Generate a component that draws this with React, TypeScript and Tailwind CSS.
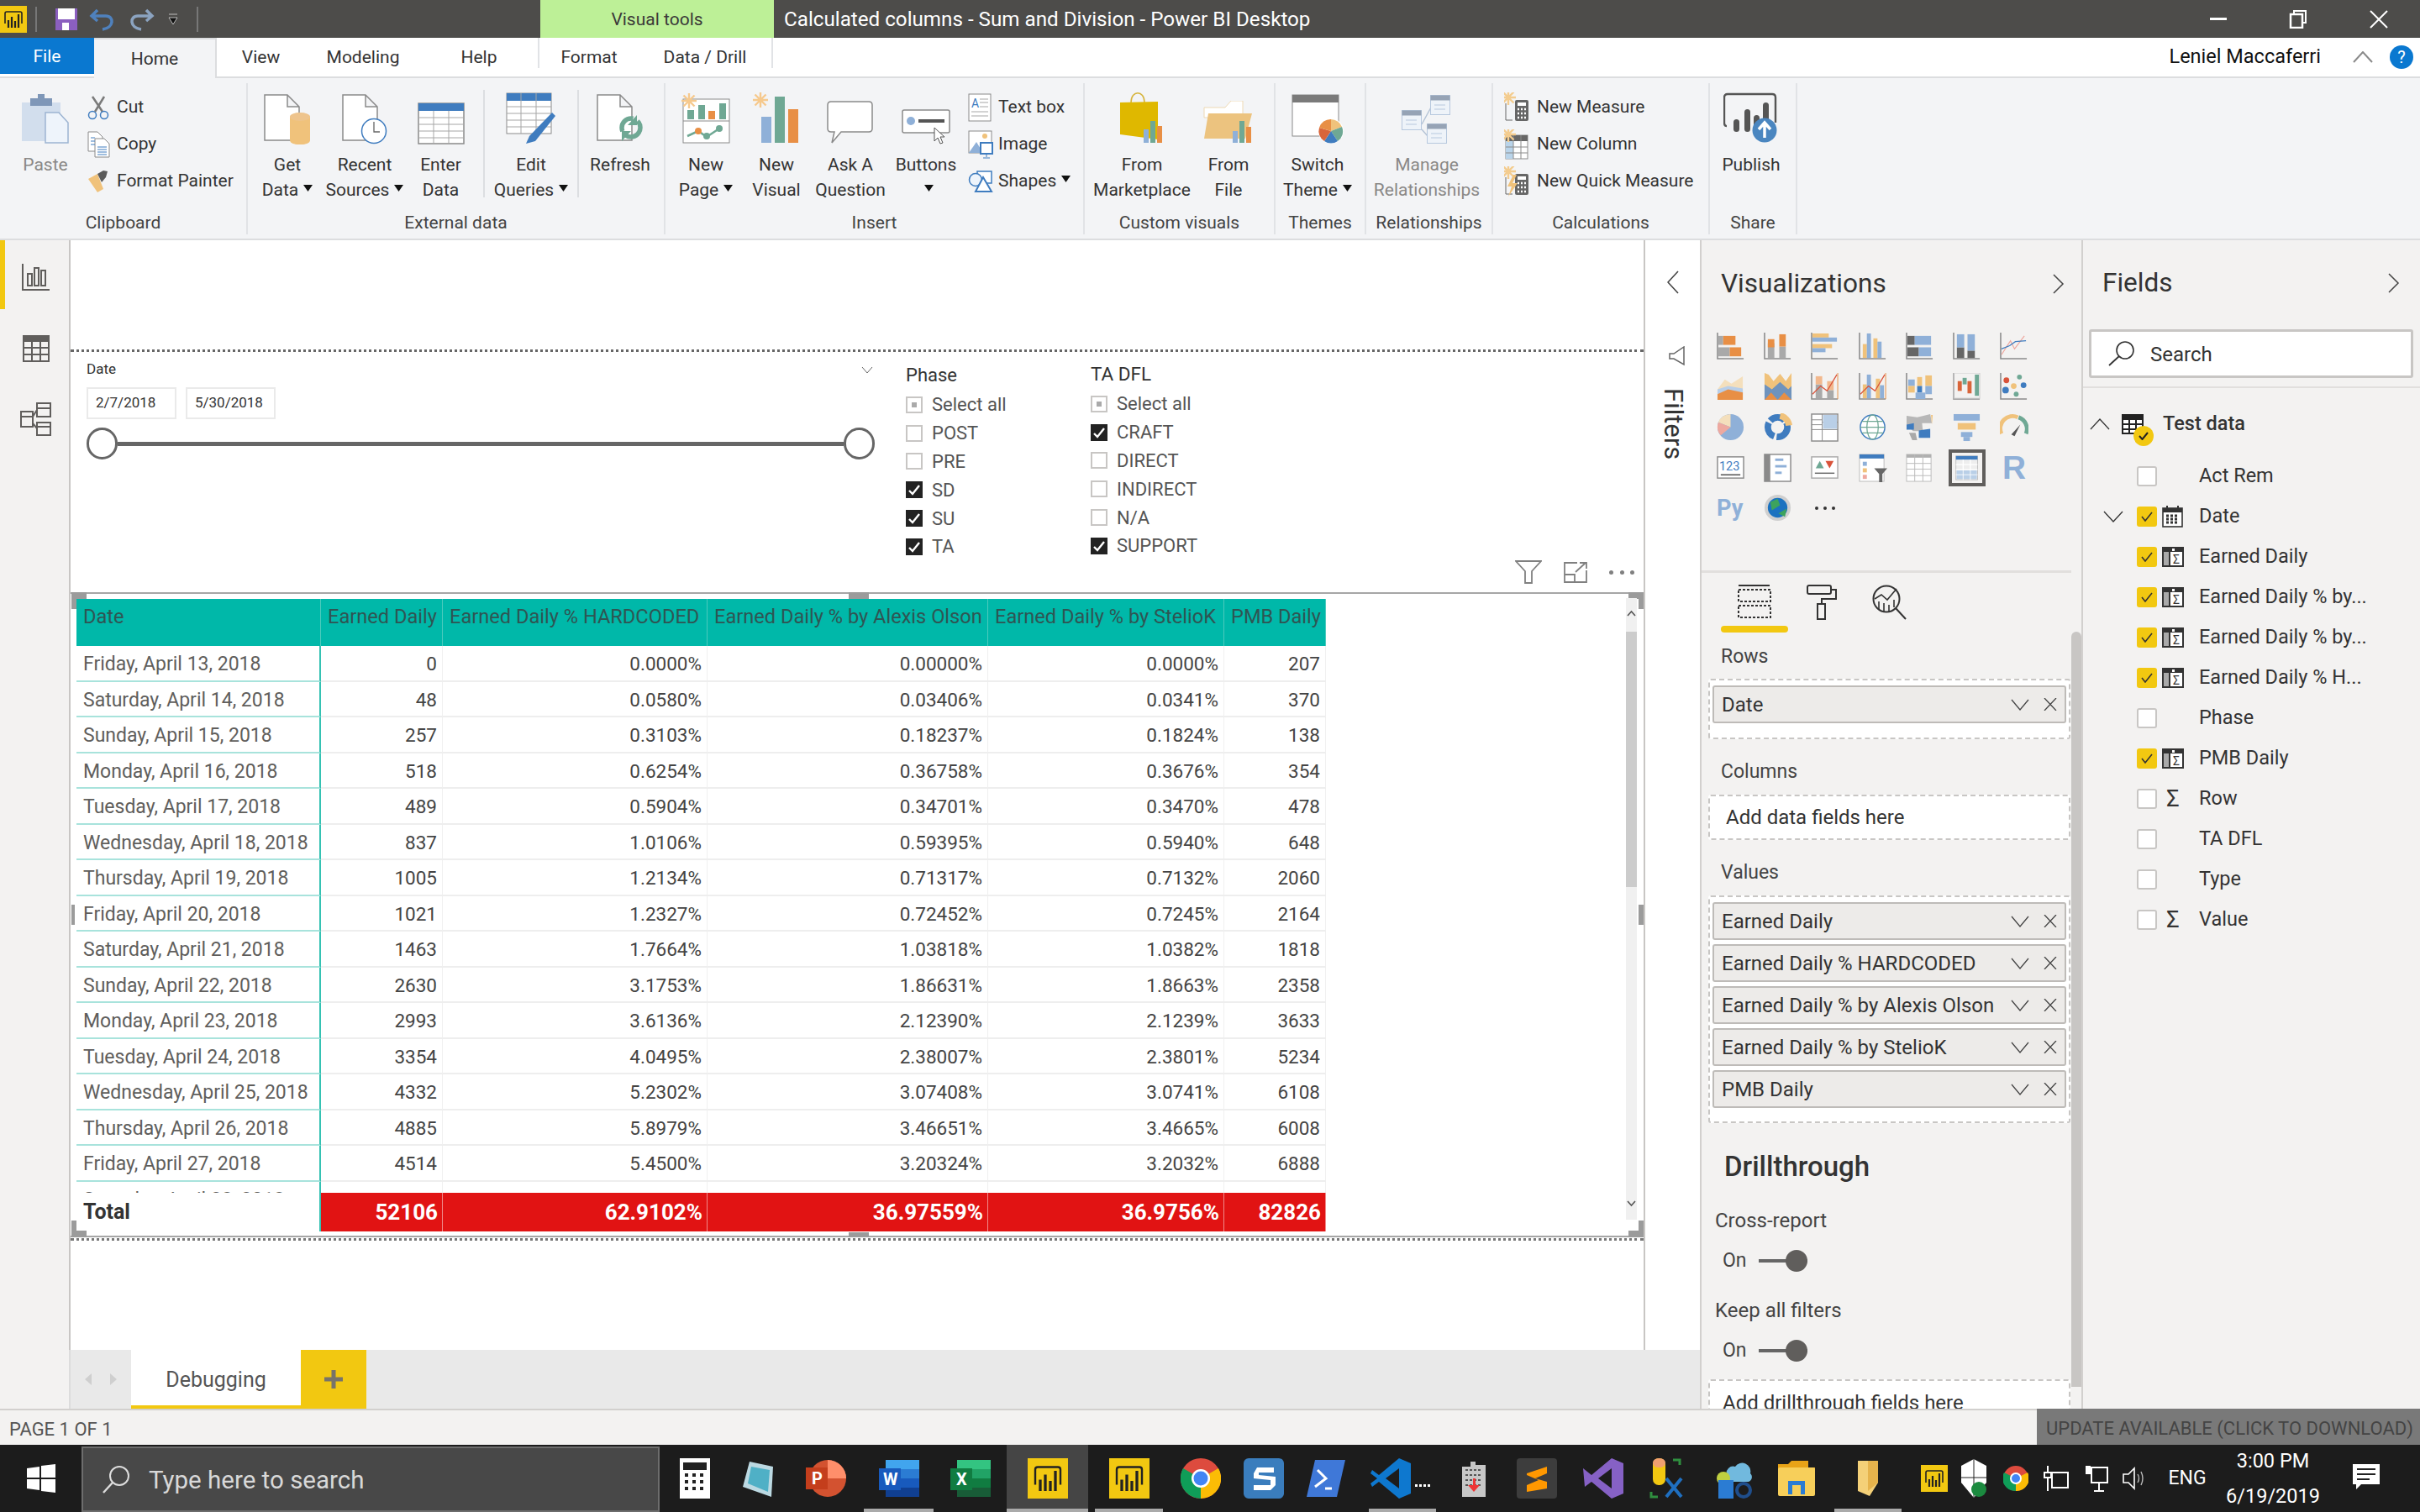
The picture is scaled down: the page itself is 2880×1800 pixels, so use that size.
import type { ReactNode } from 'react';

const GRAY = '#8a8a8a';
const BLUE = '#3f7cbf';
const LBLUE = '#8fb0d8';
const GREEN = '#6fa894';
const ORANGE = '#e88f45';
const TAN = '#f0c27b';
const YELLOW = '#f2c811';

function Star({ x, y, c = '#f6c98d' }: { x: number; y: number; c?: string }) {
  return (
    <g stroke={c} strokeWidth="2.4" transform={`translate(${x} ${y})`}>
      <path d="M0-9V9M-9 0H9M-6.5-6.5L6.5 6.5M-6.5 6.5L6.5-6.5" />
    </g>
  );
}

function PageShape({ w = 42, h = 55 }: { w?: number; h?: number }) {
  return <path d={`M1 1H${w - 14}L${w} ${15}V${h}H1Z M${w - 14} 1V15H${w}`} fill="#fff" stroke={GRAY} strokeWidth="1.5" />;
}

const Dropdown = () => (
  <svg width="11" height="8" viewBox="0 0 11 8" className="inline-block ml-[6px] mb-[6px]">
    <path d="M0 0H11L5.5 8Z" fill="#111" />
  </svg>
);

function Paste() {
  return (
    <svg width="58" height="62" viewBox="0 0 58 62">
      <rect x="1" y="12" width="46" height="46" fill="#d2deed" />
      <path d="M11 12V7H20V2H28V7H37V16H11Z" fill="#7f97b8" />
      <path d="M29 24H45L56 36V60H29Z" fill="#eef4fb" stroke="#9db4d2" strokeWidth="1.5" />
    </svg>
  );
}
function Cut() {
  return (
    <svg width="27" height="30" viewBox="0 0 27 30">
      <path d="M6 2L18 20M20 2L9 20" stroke="#7a7a7a" strokeWidth="2.5" fill="none" />
      <circle cx="6" cy="24" r="4.5" stroke={BLUE} strokeWidth="1.5" fill="none" />
      <circle cx="20" cy="24" r="4.5" stroke={BLUE} strokeWidth="1.5" fill="none" />
    </svg>
  );
}
function Copy() {
  return (
    <svg width="27" height="32" viewBox="0 0 27 32">
      <path d="M1 1H12L18 7V24H1Z" fill="#fff" stroke={GRAY} />
      <path d="M9 9H20L26 15V31H9Z" fill="#fff" stroke={GRAY} />
      <path d="M4 8H9M4 12H9M4 16H9M12 19H23M12 22H23M12 25H23M12 28H23" stroke={BLUE} />
    </svg>
  );
}
function Brush() {
  return (
    <svg width="27" height="26" viewBox="0 0 27 26">
      <path d="M1 10L12 4L19 22L12 26Z" fill={TAN} />
      <path d="M12 4L19 0L24 1L22 8L17 14Z" fill="#5b5b5b" />
    </svg>
  );
}
function GetData() {
  return (
    <svg width="56" height="60" viewBox="0 0 56 60">
      <PageShape />
      <path d="M31 28C31 21 55 21 55 28V55C55 62 31 62 31 55Z" fill={TAN} />
      <ellipse cx="43" cy="27" rx="12" ry="5" fill="#eec48d" />
    </svg>
  );
}
function Recent() {
  return (
    <svg width="54" height="60" viewBox="0 0 54 60">
      <PageShape />
      <circle cx="38" cy="44" r="14.5" fill="#fff" stroke={BLUE} strokeWidth="1.5" />
      <path d="M38 33V45H45" fill="none" stroke="#666" strokeWidth="1.3" />
    </svg>
  );
}
function EnterData() {
  return (
    <svg width="56" height="50" viewBox="0 0 56 50">
      <rect x="1" y="1" width="54" height="48" fill="#fff" stroke={GRAY} strokeWidth="1.5" />
      <rect x="1" y="1" width="54" height="9" fill={BLUE} />
      <path d="M1 18H55M1 26H55M1 34H55M1 42H55M19 10V49M37 10V49" stroke="#a6a6a6" />
    </svg>
  );
}
function EditQueries() {
  return (
    <svg width="60" height="62" viewBox="0 0 60 62">
      <rect x="1" y="1" width="53" height="48" fill="#fff" stroke={GRAY} />
      <rect x="1" y="1" width="53" height="9" fill={BLUE} />
      <path d="M1 17H54M1 25H54M1 33H54M1 41H54M18 1V49M36 1V49" stroke="#a6a6a6" />
      <path d="M55 24L59 28L35 58L24 61L28 52Z" fill={BLUE} />
    </svg>
  );
}
function Refresh() {
  return (
    <svg width="56" height="60" viewBox="0 0 56 60">
      <PageShape />
      <circle cx="41" cy="40" r="11" fill="none" stroke={GREEN} strokeWidth="5.5" strokeDasharray="24 6" />
      <path d="M48 25V37H37Z" fill={GREEN} />
      <path d="M30 56V44H41Z" fill={GREEN} />
    </svg>
  );
}
function NewPage() {
  return (
    <svg width="58" height="62" viewBox="0 0 58 62">
      <rect x="2" y="8" width="55" height="52" fill="#fff" stroke={GRAY} />
      <path d="M2 34H57" stroke={GRAY} />
      <rect x="7" y="21" width="8" height="11" fill={GREEN} />
      <rect x="20" y="15" width="8" height="17" fill={GREEN} />
      <rect x="32" y="22" width="8" height="10" fill={ORANGE} />
      <rect x="45" y="13" width="8" height="19" fill={GREEN} />
      <path d="M7 52L20 46L30 53L45 43" stroke={GREEN} strokeWidth="2.5" fill="none" />
      <circle cx="20" cy="46" r="4" fill={ORANGE} />
      <circle cx="30" cy="52" r="4" fill={GREEN} />
      <circle cx="45" cy="43" r="4" fill={GREEN} />
      <Star x={9} y={10} />
    </svg>
  );
}
function NewVisual() {
  return (
    <svg width="56" height="62" viewBox="0 0 56 62">
      <Star x={9} y={9} />
      <rect x="10" y="29" width="12" height="31" fill={LBLUE} />
      <rect x="26" y="5" width="12" height="55" fill={GREEN} />
      <rect x="42" y="20" width="12" height="40" fill={ORANGE} />
    </svg>
  );
}
function Ask() {
  return (
    <svg width="56" height="52" viewBox="0 0 56 52">
      <path d="M5 1H50Q54 1 54 5V33Q54 37 50 37H17L6 50L9 37H5Q1 37 1 33V5Q1 1 5 1Z" fill="#fff" stroke="#8a8a8a" strokeWidth="1.5" />
    </svg>
  );
}
function Buttons() {
  return (
    <svg width="58" height="42" viewBox="0 0 58 42">
      <rect x="1" y="1" width="56" height="27" rx="2" fill="#fff" stroke={GRAY} strokeWidth="1.5" />
      <circle cx="11" cy="14" r="5" fill={LBLUE} />
      <rect x="20" y="12" width="31" height="4" fill="#555" />
      <path d="M39 22V38L43 34L46 41L49 40L46 33H51Z" fill="#fff" stroke="#555" />
    </svg>
  );
}
function TextBoxI() {
  return (
    <svg width="28" height="34" viewBox="0 0 28 34">
      <rect x="1" y="1" width="26" height="32" fill="#fff" stroke={GRAY} />
      <text x="4" y="17" fontSize="14" fill={BLUE} fontFamily="Roboto">A</text>
      <path d="M14 7H24M14 11H24M14 16H24M4 22H24M4 27H24" stroke="#a6a6a6" />
    </svg>
  );
}
function ImageI() {
  return (
    <svg width="30" height="34" viewBox="0 0 30 34">
      <rect x="1" y="1" width="27" height="26" fill="#fff" stroke={GRAY} />
      <circle cx="20" cy="7" r="3" fill={TAN} />
      <path d="M1 27L10 14L18 27Z" fill={LBLUE} />
      <rect x="15" y="15" width="14" height="13" fill="#fff" stroke={BLUE} strokeWidth="2" />
      <path d="M22 28V32M18 33H26" stroke={BLUE} />
    </svg>
  );
}
function ShapesI() {
  return (
    <svg width="30" height="26" viewBox="0 0 30 26">
      <rect x="11" y="1" width="17" height="14" fill="#fff" stroke={BLUE} strokeWidth="1.5" />
      <circle cx="9" cy="11" r="7.5" fill="#eef4fb" stroke={BLUE} strokeWidth="1.5" />
      <path d="M18 8L28 25H9Z" fill="#fff" stroke={BLUE} strokeWidth="2" />
    </svg>
  );
}
function Market() {
  return (
    <svg width="54" height="62" viewBox="0 0 54 62">
      <path d="M14 12C14-3 30-3 30 12" fill="none" stroke="#d6b43c" strokeWidth="1.5" />
      <path d="M1 12L46 11V56L1 50Z" fill="#dfb800" transform="translate(0 0)" />
      <rect x="29" y="44" width="6" height="16" fill={LBLUE} />
      <rect x="37" y="34" width="6" height="26" fill={GREEN} />
      <rect x="45" y="40" width="6" height="20" fill={ORANGE} />
    </svg>
  );
}
function FromFile() {
  return (
    <svg width="60" height="52" viewBox="0 0 60 52">
      <path d="M1 8H26L33 0H47V20H1Z" fill="#fff" stroke="#eed9b4" />
      <path d="M6 15H58L50 45H1Z" fill="#ecc37f" />
      <rect x="35" y="36" width="6" height="14" fill={LBLUE} />
      <rect x="43" y="24" width="6" height="26" fill={GREEN} />
      <rect x="51" y="31" width="6" height="19" fill={ORANGE} />
    </svg>
  );
}
function Theme() {
  return (
    <svg width="62" height="60" viewBox="0 0 62 60">
      <rect x="1" y="1" width="55" height="49" fill="#fff" stroke={GRAY} />
      <rect x="1" y="1" width="55" height="9" fill="#7a7a7a" />
      <circle cx="47" cy="44" r="15" fill="#fff" />
      <path d="M47 44V30A14 14 0 0 1 60 39Z" fill={TAN} />
      <path d="M47 44L60 39A14 14 0 0 1 55 56Z" fill={GREEN} />
      <path d="M47 44L55 56A14 14 0 0 1 39 56Z" fill={BLUE} />
      <path d="M47 44L39 56A14 14 0 0 1 33 40Z" fill="#d9653a" />
      <path d="M47 44L33 40A14 14 0 0 1 47 30Z" fill={ORANGE} />
    </svg>
  );
}
function Rel() {
  return (
    <svg width="60" height="60" viewBox="0 0 60 60">
      <path d="M24 36L36 14M24 42L31 50" stroke="#b6c4d6" strokeWidth="1.5" />
      {[[34, 1], [0, 19], [30, 35]].map(([x, y]) => (
        <g key={x + '-' + y} transform={`translate(${x} ${y})`}>
          <rect x="0.5" y="0.5" width="23" height="23" fill="#eef3f9" stroke="#b7c8de" />
          <rect x="0.5" y="0.5" width="23" height="6" fill="#96a3b5" />
          <path d="M5 12H18M5 17H18" stroke="#b7c8de" />
        </g>
      ))}
    </svg>
  );
}
function MeasureI({ bolt }: { bolt?: boolean }) {
  return (
    <svg width="32" height="36" viewBox="0 0 32 36">
      <Star x={5} y={6} c="#f3cc8f" />
      <path d="M2 13V33H10" fill="none" stroke="#666" />
      <rect x="13" y="9" width="16" height="25" rx="2" fill="#666" />
      <rect x="16" y="12" width="10" height="4" fill="#fff" />
      <path d="M16 20H26M16 25H26M16 30H26" stroke="#fff" strokeWidth="2.5" strokeDasharray="2 2" />
      {bolt && <path d="M11 10L4 24H9L5 36L16 20H10L15 10Z" fill={TAN} />}
    </svg>
  );
}
function ColumnI() {
  return (
    <svg width="30" height="36" viewBox="0 0 30 36">
      <rect x="2" y="7" width="26" height="28" fill="#fff" stroke="#8a8a8a" />
      <rect x="2" y="7" width="26" height="7" fill="#666" />
      <rect x="2" y="14" width="9" height="21" fill="#b9d4ea" />
      <path d="M2 21H28M2 28H28M11 7V35M20 7V35" stroke="#8a8a8a" />
      <Star x={5} y={6} c="#f3cc8f" />
    </svg>
  );
}
function Publish() {
  return (
    <svg width="66" height="62" viewBox="0 0 66 62">
      <path d="M4 40Q1 40 1 36V6Q1 2 5 2H58Q62 2 62 6V36" fill="none" stroke="#555" strokeWidth="2.4" />
      <rect x="12" y="32" width="7" height="15" rx="3.5" fill="#555" />
      <rect x="25" y="20" width="7" height="27" rx="3.5" fill="#555" />
      <rect x="36" y="27" width="7" height="20" rx="3.5" fill="#555" />
      <rect x="47" y="12" width="7" height="28" rx="3.5" fill="#555" />
      <circle cx="49" cy="45" r="14.5" fill="#4a86c0" />
      <path d="M49 54V38M42 44L49 36L56 44" stroke="#fff" strokeWidth="3.5" fill="none" />
    </svg>
  );
}
const PbiMark = ({ size = 32 }: { size?: number }) => (
  <svg width={size} height={size} viewBox="0 0 32 32">
    <rect width="32" height="32" fill={YELLOW} />
    <path d="M6 21V9Q6 7 8 7H24Q26 7 26 9V21" fill="none" stroke="#222" strokeWidth="1.6" />
    <path d="M10 17V26M14 13V26M18 18V26M22 10V26" stroke="#222" strokeWidth="2.2" />
  </svg>
);

function LargeBtn({ w, icon, l1, l2, caret, dim, lone }: { w: string; icon: ReactNode; l1: string; l2?: string; caret?: boolean; dim?: boolean; lone?: boolean }) {
  return (
    <div className={`${w} flex flex-col items-center ${dim ? 'text-[#8a8886]' : 'text-[#333]'}`}>
      <div className="h-[82px] flex items-end justify-center pb-[9px]">{icon}</div>
      <div className="leading-[30px] whitespace-nowrap">{l1}</div>
      <div className="leading-[30px] h-[30px] whitespace-nowrap">
        {l2}
        {caret && !lone && <Dropdown />}
        {lone && <Dropdown />}
      </div>
    </div>
  );
}

function SmallBtn({ icon, label, box, caret }: { icon: ReactNode; label: string; box: string; caret?: boolean }) {
  return (
    <div className="h-[44px] flex items-center text-[#333] whitespace-nowrap">
      <div className={`${box} flex items-center`}>{icon}</div>
      {label}
      {caret && <Dropdown />}
    </div>
  );
}

function Group({ w, label, children }: { w: string; label: string; children: ReactNode }) {
  return (
    <div className={`${w} h-[180px] border-r-2 border-[#e1e3e6] flex flex-col shrink-0`}>
      <div className="h-[151px] flex">{children}</div>
      <div className="h-[29px] leading-[31px] text-center text-[#444] text-[21px] whitespace-nowrap">{label}</div>
    </div>
  );
}

function Ribbon() {
  return (
    <div className="h-[193px] bg-[#f3f4f6] border-b-2 border-[#dcdddf] flex pt-[6px] text-[21px]">
      <Group w="w-[295px]" label="Clipboard">
        <div className="w-[104px] pl-[4px]"><LargeBtn w="w-[100px]" icon={<Paste />} l1="Paste" dim /></div>
        <div className="pt-[7px]">
          <SmallBtn box="w-[35px]" icon={<Cut />} label="Cut" />
          <SmallBtn box="w-[35px]" icon={<Copy />} label="Copy" />
          <SmallBtn box="w-[35px]" icon={<Brush />} label="Format Painter" />
        </div>
      </Group>
      <Group w="w-[497px]" label="External data">
        <LargeBtn w="w-[94px]" icon={<GetData />} l1="Get" l2="Data" caret />
        <LargeBtn w="w-[90px]" icon={<Recent />} l1="Recent" l2="Sources" caret />
        <LargeBtn w="w-[91px]" icon={<EnterData />} l1="Enter" l2="Data" />
        <div className="w-[2px] h-[128px] mt-[8px] ml-[5px] bg-[#dcdee1]" />
        <LargeBtn w="w-[110px]" icon={<EditQueries />} l1="Edit" l2="Queries" caret />
        <div className="w-[2px] h-[128px] mt-[8px] bg-[#dcdee1]" />
        <LargeBtn w="w-[98px]" icon={<Refresh />} l1="Refresh" />
      </Group>
      <Group w="w-[499px]" label="Insert">
        <LargeBtn w="w-[96px]" icon={<NewPage />} l1="New" l2="Page" caret />
        <LargeBtn w="w-[72px]" icon={<NewVisual />} l1="New" l2="Visual" />
        <LargeBtn w="w-[104px]" icon={<Ask />} l1="Ask A" l2="Question" />
        <LargeBtn w="w-[76px]" icon={<Buttons />} l1="Buttons" lone />
        <div className="pt-[7px] ml-[12px]">
          <SmallBtn box="w-[36px]" icon={<TextBoxI />} label="Text box" />
          <SmallBtn box="w-[36px]" icon={<ImageI />} label="Image" />
          <SmallBtn box="w-[36px]" icon={<ShapesI />} label="Shapes" caret />
        </div>
      </Group>
      <Group w="w-[227px]" label="Custom visuals">
        <LargeBtn w="w-[136px]" icon={<Market />} l1="From" l2="Marketplace" />
        <LargeBtn w="w-[70px]" icon={<FromFile />} l1="From" l2="File" />
      </Group>
      <Group w="w-[108px]" label="Themes">
        <LargeBtn w="w-[100px]" icon={<Theme />} l1="Switch" l2="Theme" caret />
      </Group>
      <Group w="w-[151px]" label="Relationships">
        <LargeBtn w="w-[144px]" icon={<Rel />} l1="Manage" l2="Relationships" dim />
      </Group>
      <Group w="w-[258px]" label="Calculations">
        <div className="pt-[7px] pl-[13px]">
          <SmallBtn box="w-[39px]" icon={<MeasureI />} label="New Measure" />
          <SmallBtn box="w-[39px]" icon={<ColumnI />} label="New Column" />
          <SmallBtn box="w-[39px]" icon={<MeasureI bolt />} label="New Quick Measure" />
        </div>
      </Group>
      <Group w="w-[104px]" label="Share">
        <LargeBtn w="w-[98px]" icon={<Publish />} l1="Publish" />
      </Group>
    </div>
  );
}

function TitleBar() {
  return (
    <div className="h-[45px] bg-[#4d4c4a] flex items-center text-white relative">
      <div className="pl-0 w-[42px] flex"><PbiMark /></div>
      <div className="w-[2px] h-[30px] bg-[#777]" />
      <svg className="ml-[22px]" width="26" height="26" viewBox="0 0 26 26">
        <path d="M0 0H26V26H0Z" fill="#8b5fbf" />
        <rect x="3" y="0" width="20" height="13" fill="#fff" />
        <rect x="8" y="17" width="8" height="9" fill="#fff" />
      </svg>
      <svg className="ml-[14px]" width="32" height="28" viewBox="0 0 32 28">
        <path d="M10 3L3 10L10 16M3 10H20C30 10 30 24 16 26" fill="none" stroke="#4f81bd" strokeWidth="3.5" />
      </svg>
      <svg className="ml-[14px]" width="32" height="28" viewBox="0 0 32 28">
        <path d="M22 3L29 10L22 16M29 10H12C2 10 2 24 16 26" fill="none" stroke="#8ba3c0" strokeWidth="3.5" />
      </svg>
      <svg className="ml-[16px]" width="12" height="14" viewBox="0 0 12 14">
        <path d="M1 1H11M1 5H11L6 13Z" fill="#111" stroke="#ddd" strokeWidth="0.8" />
      </svg>
      <div className="ml-[22px] w-[2px] h-[30px] bg-[#777]" />
      <div className="ml-[407px] w-[278px] h-full bg-[#bdf097] text-[#3b3a39] text-[21px] flex items-center justify-center pt-[2px]">Visual tools</div>
      <div className="ml-[12px] pt-[2px] text-[24.2px] whitespace-nowrap">Calculated columns - Sum and Division - Power BI Desktop</div>
      <div className="ml-auto flex items-center">
        <div className="w-[20px] h-[3px] bg-white mr-[74px]" />
        <svg className="mr-[74px]" width="22" height="22" viewBox="0 0 22 22">
          <path d="M6 5V1H20V15H16" fill="none" stroke="#fff" strokeWidth="2" />
          <rect x="2" y="5" width="14" height="16" fill="none" stroke="#fff" strokeWidth="2.5" />
        </svg>
        <svg className="mr-[38px]" width="22" height="22" viewBox="0 0 22 22">
          <path d="M1 1L21 21M21 1L1 21" stroke="#fff" strokeWidth="2" />
        </svg>
      </div>
    </div>
  );
}

function Tabs() {
  return (
    <div className="h-[48px] bg-white border-b-2 border-[#dcdddf] flex text-[21px] text-[#333]">
      <div className="w-[112px] h-[46px] bg-[#0a78d0] text-white flex items-center justify-center border-b-[3px] border-white pt-[2px]">File</div>
      <div className="w-[146px] h-[48px] bg-[#f3f4f6] border-r-2 border-t-2 border-[#dcdddf] flex items-center justify-center -mb-[2px] pt-[2px]">Home</div>
      <div className="w-[105px] flex items-center justify-center pt-[2px]">View</div>
      <div className="w-[120px] flex items-center justify-center ml-[9px] pt-[2px]">Modeling</div>
      <div className="w-[148px] flex items-center justify-center pl-[8px] pt-[2px]">Help</div>
      <div className="w-[2px] h-[36px] bg-[#e1e3e6]" />
      <div className="w-[118px] flex items-center justify-center pt-[2px]">Format</div>
      <div className="w-[158px] flex items-center justify-center pt-[2px]">Data / Drill</div>
      <div className="w-[2px] h-[36px] bg-[#e1e3e6]" />
      <div className="ml-auto flex items-center text-[#111] text-[23.5px]">
        Leniel Maccaferri
        <svg className="ml-[38px]" width="24" height="14" viewBox="0 0 24 14">
          <path d="M1 13L12 1L23 13" fill="none" stroke="#8a8a8a" strokeWidth="2" />
        </svg>
        <div className="ml-[20px] mr-[8px] w-[28px] h-[28px] rounded-full bg-[#0a78d0] text-white text-[20px] flex items-center justify-center">?</div>
      </div>
    </div>
  );
}

function LeftNav() {
  return (
    <div className="w-[84px] shrink-0 bg-[#f3f2f1] border-r-2 border-[#c8c6c4] relative flex flex-col items-center pt-[28px]">
      <div className="absolute left-0 top-0 w-[6px] h-[82px] bg-[#f2c811]" />
      <svg width="34" height="32" viewBox="0 0 34 32" className="ml-[4px]">
        <path d="M1 0V31H33" fill="none" stroke="#605e5c" strokeWidth="2" />
        <path d="M7 26V12H12V26ZM15 26V5H20V26ZM23 26V8H28V26Z" fill="none" stroke="#605e5c" strokeWidth="2" />
      </svg>
      <svg width="32" height="32" viewBox="0 0 32 32" className="mt-[53px] ml-[4px]">
        <rect x="1" y="1" width="30" height="30" fill="none" stroke="#605e5c" strokeWidth="2" />
        <rect x="1" y="1" width="30" height="7" fill="#605e5c" />
        <path d="M1 15H31M1 23H31M11 8V31M21 8V31" stroke="#605e5c" strokeWidth="2" />
      </svg>
      <svg width="38" height="40" viewBox="0 0 38 40" className="mt-[48px] ml-[4px]">
        <g fill="none" stroke="#605e5c" strokeWidth="2">
          <rect x="20" y="1" width="16" height="16" />
          <rect x="1" y="11" width="14" height="18" />
          <rect x="20" y="24" width="16" height="15" />
          <path d="M15 17L20 9M15 25L20 31M1 17H15M20 7H36M20 29H36" />
        </g>
      </svg>
    </div>
  );
}

function Check({ on, half, label }: { on?: boolean; half?: boolean; label: string }) {
  return (
    <div className="h-[33.8px] flex items-center text-[#555] text-[22px] whitespace-nowrap">
      <div className={`w-[20px] h-[20px] border-2 flex items-center justify-center ${on ? 'bg-[#222] border-[#222]' : 'bg-white border-[#c8c6c4]'}`}>
        {on && (
          <svg width="14" height="14" viewBox="0 0 14 14">
            <path d="M1 8L5 12L13 2" fill="none" stroke="#fff" strokeWidth="2.4" />
          </svg>
        )}
        {half && <div className="w-[6px] h-[6px] bg-[#aaa]" />}
      </div>
      <span className="ml-[11px]">{label}</span>
    </div>
  );
}

function DateSlicer() {
  return (
    <div className="ml-[19px] w-[938px] shrink-0 pt-[11px]">
      <div className="h-[20px] flex items-center justify-between text-[17px] text-[#333]">
        Date
        <svg className="mr-[2px]" width="14" height="9" viewBox="0 0 14 9">
          <path d="M1 1L7 8L13 1" fill="none" stroke="#666" />
        </svg>
      </div>
      <div className="mt-[11px] flex gap-[11px] text-[17px] text-[#333]">
        <div className="w-[107px] h-[38px] border-2 border-[#eaeaea] flex items-center pl-[9px]">2/7/2018</div>
        <div className="w-[107px] h-[38px] border-2 border-[#eaeaea] flex items-center pl-[9px]">5/30/2018</div>
      </div>
      <div className="mt-[10px] flex items-center">
        <div className="w-[37px] h-[38px] rounded-full border-[3px] border-[#666] bg-white" />
        <div className="flex-1 h-[5px] bg-[#666]" />
        <div className="w-[37px] h-[38px] rounded-full border-[3px] border-[#666] bg-white" />
      </div>
    </div>
  );
}

const ROWS = [
  ['Friday, April 13, 2018', '0', '0.0000%', '0.00000%', '0.0000%', '207'],
  ['Saturday, April 14, 2018', '48', '0.0580%', '0.03406%', '0.0341%', '370'],
  ['Sunday, April 15, 2018', '257', '0.3103%', '0.18237%', '0.1824%', '138'],
  ['Monday, April 16, 2018', '518', '0.6254%', '0.36758%', '0.3676%', '354'],
  ['Tuesday, April 17, 2018', '489', '0.5904%', '0.34701%', '0.3470%', '478'],
  ['Wednesday, April 18, 2018', '837', '1.0106%', '0.59395%', '0.5940%', '648'],
  ['Thursday, April 19, 2018', '1005', '1.2134%', '0.71317%', '0.7132%', '2060'],
  ['Friday, April 20, 2018', '1021', '1.2327%', '0.72452%', '0.7245%', '2164'],
  ['Saturday, April 21, 2018', '1463', '1.7664%', '1.03818%', '1.0382%', '1818'],
  ['Sunday, April 22, 2018', '2630', '3.1753%', '1.86631%', '1.8663%', '2358'],
  ['Monday, April 23, 2018', '2993', '3.6136%', '2.12390%', '2.1239%', '3633'],
  ['Tuesday, April 24, 2018', '3354', '4.0495%', '2.38007%', '2.3801%', '5234'],
  ['Wednesday, April 25, 2018', '4332', '5.2302%', '3.07408%', '3.0741%', '6108'],
  ['Thursday, April 26, 2018', '4885', '5.8979%', '3.46651%', '3.4665%', '6008'],
  ['Friday, April 27, 2018', '4514', '5.4500%', '3.20324%', '3.2032%', '6888'],
  ['Saturday, April 28, 2018', '4200', '5.0709%', '2.98041%', '2.9804%', '6120'],
];
const HEADERS = ['Date', 'Earned Daily', 'Earned Daily % HARDCODED', 'Earned Daily % by Alexis Olson', 'Earned Daily % by StelioK', 'PMB Daily'];
const TOTALS = ['52106', '62.9102%', '36.97559%', '36.9756%', '82826'];
const COLS = 'grid grid-cols-[291px_145px_315px_334px_281px_121px] w-[1487px]';

function Handle({ className }: { className: string }) {
  return <div className={`absolute bg-[#9b9b9b] ${className}`} />;
}

function TableVisual() {
  return (
    <div className="relative h-[768px] border-t-2 border-b-2 border-[#a6a6a6] pl-[7px] pt-[6px] text-[23px] shrink-0">
      <Handle className="left-[1px] -top-[2px] w-[18px] h-[8px]" />
      <Handle className="left-[1px] -top-[2px] w-[6px] h-[20px]" />
      <Handle className="left-[926px] -top-[2px] w-[24px] h-[8px]" />
      <Handle className="right-0 -top-[2px] w-[18px] h-[8px]" />
      <Handle className="right-0 -top-[2px] w-[6px] h-[20px]" />
      <Handle className="left-[1px] top-[370px] w-[4px] h-[24px]" />
      <Handle className="right-0 top-[370px] w-[6px] h-[24px]" />
      <Handle className="left-[1px] -bottom-[2px] w-[18px] h-[8px]" />
      <Handle className="left-[1px] -bottom-[2px] w-[6px] h-[20px]" />
      <Handle className="left-[926px] -bottom-[2px] w-[24px] h-[6px]" />
      <Handle className="right-0 -bottom-[2px] w-[18px] h-[8px]" />
      <Handle className="right-0 -bottom-[2px] w-[6px] h-[20px]" />

      <div className="absolute right-[11px] -top-[40px] flex items-center gap-[26px]">
        <svg width="32" height="28" viewBox="0 0 32 28">
          <path d="M1 1H31L20 13V27H12V13Z" fill="none" stroke="#808080" strokeWidth="1.8" />
        </svg>
        <svg width="28" height="25" viewBox="0 0 28 25">
          <path d="M1 8V24H27V10M1 8V1H16" fill="none" stroke="#808080" strokeWidth="1.8" />
          <path d="M14 12L26 1M19 1H27V8M1 15H13V24" fill="none" stroke="#808080" strokeWidth="1.8" />
        </svg>
        <div className="flex gap-[7.5px]">
          <span className="w-[5px] h-[5px] rounded-full bg-[#808080]" />
          <span className="w-[5px] h-[5px] rounded-full bg-[#808080]" />
          <span className="w-[5px] h-[5px] rounded-full bg-[#808080]" />
        </div>
      </div>

      <div className="absolute right-[8px] top-[5px] w-[13px] h-[740px] bg-[#f0f0f0]">
        <svg className="absolute left-[1px] top-[14px]" width="11" height="8" viewBox="0 0 11 8">
          <path d="M1 7L5.5 2L10 7" fill="none" stroke="#555" strokeWidth="1.6" />
        </svg>
        <div className="absolute left-0 top-[40px] w-[13px] h-[304px] bg-[#cccccc]" />
        <svg className="absolute left-[1px] bottom-[15px]" width="11" height="8" viewBox="0 0 11 8">
          <path d="M1 1L5.5 6L10 1" fill="none" stroke="#555" strokeWidth="1.6" />
        </svg>
      </div>

      <div className={`${COLS} h-[56px] bg-[#00b8a9] text-[#2f5553] text-[23.6px]`}>
        {HEADERS.map((h) => (
          <div key={h} className="px-[8px] pt-[7px] whitespace-nowrap border-r border-[#4ccabd] leading-[28px]">{h}</div>
        ))}
      </div>
      <div className="h-[651px] overflow-hidden w-[1487px]">
        {ROWS.map((r) => (
          <div key={r[0]} className={`${COLS} h-[42.5px]`}>
            {r.map((c, i) => (
              <div
                key={i}
                className={
                  i === 0
                    ? 'px-[8px] pt-[4px] flex items-center whitespace-nowrap text-[#605e5c] border-r-2 border-r-[#35c2b3] border-b-2 border-b-[#a8e3dc]'
                    : 'pl-[8px] pr-[6px] pt-[4px] flex items-center justify-end text-[#444] text-[22.5px] border-r border-r-[#f0f0f0] border-b-2 border-b-[#eeeeee]'
                }
              >
                {c}
              </div>
            ))}
          </div>
        ))}
      </div>
      <div className={`${COLS} h-[46px]`}>
        <div className="px-[8px] flex items-center font-bold text-[25px] text-[#333] border-r-2 border-[#35c2b3] bg-white">Total</div>
        {TOTALS.map((t) => (
          <div key={t} className="pl-[8px] pr-[5px] flex items-center justify-end bg-[#e11313] text-white font-bold text-[26px] border-r border-[#f08a8a]">{t}</div>
        ))}
      </div>
    </div>
  );
}

function Canvas() {
  return (
    <div className="flex-1 min-w-0 bg-white flex flex-col">
      <div className="h-[133px] border-b-[3px] border-dotted border-[#666]" />
      <div className="h-[286px] flex">
        <DateSlicer />
        <div className="ml-[37px] w-[220px] pt-[16px] shrink-0">
          <div className="h-[24px] leading-[24px] text-[#333] text-[22px] mb-[6px]">Phase</div>
          <Check half label="Select all" />
          <Check label="POST" />
          <Check label="PRE" />
          <Check on label="SD" />
          <Check on label="SU" />
          <Check on label="TA" />
        </div>
        <div className="pt-[14px]">
          <div className="h-[24px] leading-[24px] text-[#333] text-[22.5px] mb-[7px]">TA DFL</div>
          <Check half label="Select all" />
          <Check on label="CRAFT" />
          <Check label="DIRECT" />
          <Check label="INDIRECT" />
          <Check label="N/A" />
          <Check on label="SUPPORT" />
        </div>
      </div>
      <TableVisual />
      <div className="mt-[1px] border-b-[3px] border-dotted border-[#777]" />
    </div>
  );
}

function FiltersStrip() {
  return (
    <div className="w-[67px] shrink-0 bg-white border-l-2 border-[#c8c6c4] flex flex-col items-center pt-[36px]">
      <svg width="14" height="28" viewBox="0 0 14 28"><path d="M13 1L1 14L13 27" fill="none" stroke="#444" strokeWidth="1.6" /></svg>
      <svg className="mt-[62px] ml-[10px]" width="20" height="26" viewBox="0 0 20 26">
        <path d="M18 1V22L6 15H1V9H6Z" fill="none" stroke="#666" strokeWidth="1.5" />
      </svg>
      <div className="mt-[24px] text-[31px] text-[#333] [writing-mode:vertical-rl] leading-[34px]">Filters</div>
    </div>
  );
}

function PageTabs() {
  return (
    <div className="h-[70px] bg-[#e9e9e9] flex">
      <div className="w-[84px] bg-[#f3f2f1] border-r-2 border-[#dcdcdc]" />
      <div className="w-[72px] flex items-center justify-around px-[6px]">
        <svg width="8" height="14" viewBox="0 0 8 14"><path d="M8 0V14L0 7Z" fill="#cfcfcf" /></svg>
        <svg width="8" height="14" viewBox="0 0 8 14"><path d="M0 0V14L8 7Z" fill="#cfcfcf" /></svg>
      </div>
      <div className="w-[202px] bg-white border-b-4 border-[#f2c811] flex items-center justify-center text-[25px] text-[#555] pt-[5px]">Debugging</div>
      <div className="w-[78px] bg-[#f2c811] flex items-center justify-center">
        <svg width="22" height="22" viewBox="0 0 22 22"><path d="M11 0V22M0 11H22" stroke="#77736a" strokeWidth="5" /></svg>
      </div>
    </div>
  );
}

/* Visualizations palette, one small drawing per visual type */
const Axis = () => <path d="M1 0V32H33" fill="none" stroke={GRAY} strokeWidth="1.6" />;
const bar = (x: number, y: number, w: number, h: number, f: string) => <rect x={x} y={y} width={w} height={h} fill={f} />;
const VIZ: ReactNode[] = [
  <><Axis />{bar(2, 4, 6, 11, '#a9a9a9')}{bar(8, 4, 15, 11, ORANGE)}{bar(2, 18, 14, 11, '#a9a9a9')}{bar(16, 18, 14, 11, ORANGE)}</>,
  <><Axis />{bar(5, 13, 8, 18, '#a9a9a9')}{bar(5, 8, 8, 10, ORANGE)}{bar(19, 17, 8, 14, '#a9a9a9')}{bar(19, 2, 8, 15, ORANGE)}</>,
  <><Axis />{bar(2, 1, 20, 5, TAN)}{bar(2, 6, 30, 5, LBLUE)}{bar(2, 14, 24, 5, TAN)}{bar(2, 19, 16, 5, LBLUE)}</>,
  <><Axis />{bar(5, 14, 5, 17, TAN)}{bar(10, 1, 5, 30, LBLUE)}{bar(18, 7, 5, 24, TAN)}{bar(23, 11, 5, 20, LBLUE)}</>,
  <><Axis />{bar(2, 4, 9, 11, '#666')}{bar(11, 4, 20, 11, LBLUE)}{bar(2, 18, 14, 11, '#666')}{bar(16, 18, 15, 11, LBLUE)}</>,
  <><Axis />{bar(5, 18, 9, 13, '#666')}{bar(5, 2, 9, 16, LBLUE)}{bar(18, 22, 9, 9, '#666')}{bar(18, 2, 9, 20, LBLUE)}</>,
  <><Axis /><path d="M2 27L13 10L18 20L30 4" fill="none" stroke="#eea9a0" strokeWidth="1.3" /><path d="M2 20L12 16L19 11L32 10" fill="none" stroke={BLUE} strokeWidth="1.3" /></>,
  <><path d="M1 20L10 8L18 13L32 4V32H1Z" fill="#f4dfbc" /><path d="M1 20L14 16L32 19V26H1Z" fill="#b8cee8" /><path d="M1 26L14 20L32 24V33H1Z" fill={ORANGE} /></>,
  <><path d="M1 0V33H34V0L27 10L20 1L12 10L6 2Z" fill={TAN} /><path d="M1 14L10 20L20 11L30 20L34 16V33H1Z" fill="#6f93bd" /><path d="M1 33L9 24L17 33L25 24L34 33Z" fill={ORANGE} /></>,
  <><Axis />{bar(6, 14, 8, 17, '#a9a9a9')}{bar(6, 4, 8, 10, '#f2b88d')}{bar(20, 21, 8, 10, '#a9a9a9')}{bar(20, 10, 8, 11, '#f2b88d')}<path d="M2 26L12 16L20 22L32 2" fill="none" stroke="#d9533a" strokeWidth="1.3" /><path d="M33 0V32" stroke={ORANGE} /></>,
  <><Axis />{bar(5, 14, 5, 17, TAN)}{bar(10, 2, 5, 29, LBLUE)}{bar(21, 7, 5, 24, TAN)}{bar(26, 15, 5, 16, LBLUE)}<path d="M2 26L12 16L20 22L32 2" fill="none" stroke="#d9533a" strokeWidth="1.3" /><path d="M33 0V32" stroke={ORANGE} /></>,
  <><Axis />{bar(3, 8, 8, 8, LBLUE)}{bar(3, 16, 8, 8, TAN)}{bar(14, 5, 6, 11, TAN)}{bar(14, 16, 6, 8, BLUE)}{bar(24, 3, 8, 13, TAN)}{bar(24, 16, 8, 10, LBLUE)}{bar(12, 24, 12, 8, LBLUE)}</>,
  <><Axis />{bar(27, 2, 5, 26, GREEN)}{bar(6, 10, 5, 12, '#d9653a')}{bar(12, 6, 5, 8, GREEN)}{bar(18, 10, 5, 15, '#d9653a')}<rect x="1" y="0" width="32" height="31" fill="none" stroke="#ccc" /></>,
  <><Axis /><circle cx="8" cy="9" r="3.5" fill="#d9533a" /><circle cx="24" cy="5" r="3" fill={GREEN} /><circle cx="7" cy="21" r="4" fill={BLUE} /><circle cx="17" cy="16" r="3.5" fill={TAN} /><circle cx="29" cy="15" r="3.5" fill={BLUE} /><circle cx="20" cy="26" r="3" fill={GREEN} /></>,
  <><circle cx="17" cy="17" r="16" fill={LBLUE} /><path d="M17 17V1A16 16 0 0 0 2 11Z" fill="#f4dfbc" /><path d="M17 17L2 11A16 16 0 0 0 5 27Z" fill="#eea9a0" /></>,
  <><circle cx="17" cy="17" r="12" fill="none" stroke={BLUE} strokeWidth="8" strokeDasharray="20 3" /><path d="M20 3A14 14 0 0 1 31 15" fill="none" stroke={TAN} strokeWidth="8" /></>,
  <><rect x="1" y="1" width="32" height="33" fill="#fff" stroke={GRAY} strokeWidth="1.5" /><path d="M1 20H33M14 1V34M1 8H14M1 14H14M14 11H33" stroke={GRAY} />{bar(15, 2, 17, 17, '#b9cfe7')}</>,
  <><circle cx="17" cy="17" r="15" fill="#fff" stroke={BLUE} strokeWidth="1.5" /><ellipse cx="17" cy="17" rx="7" ry="15" fill="none" stroke={GREEN} strokeWidth="1.3" /><path d="M2 17H32M4 10H30M4 24H30" stroke={GREEN} strokeWidth="1.3" /></>,
  <><path d="M1 3L14 5L30 1L32 12L20 12L21 22L9 22L1 15Z" fill="#b7b7b7" /><path d="M1 14L10 12V20L1 20Z" fill={BLUE} /><path d="M16 21L30 19L30 30L16 30Z" fill={BLUE} /><path d="M4 24L12 24L14 33L8 33Z" fill="#a9a9a9" /><path d="M31 2L33 2L32 14Z" fill={TAN} /></>,
  <>{bar(1, 1, 32, 8, LBLUE)}{bar(6, 12, 22, 8, TAN)}{bar(10, 23, 14, 6, LBLUE)}{bar(13, 29, 8, 5, LBLUE)}</>,
  <><path d="M2 25A15 15 0 0 1 22 5" fill="none" stroke={TAN} strokeWidth="5" /><path d="M23 5A15 15 0 0 1 32 25" fill="none" stroke={GREEN} strokeWidth="5" /><path d="M14 26L25 14L18 28Z" fill="#555" /></>,
  <><rect x="1" y="4" width="32" height="26" fill="#fff" stroke={GRAY} strokeWidth="1.5" /><text x="3" y="21" fontSize="15" fill={BLUE} fontFamily="Roboto">123</text><path d="M5 26H29" stroke="#555" strokeWidth="1.6" /></>,
  <><rect x="1" y="1" width="32" height="33" fill="#fff" stroke={GRAY} strokeWidth="1.5" />{bar(1, 1, 7, 33, GRAY)}{bar(14, 6, 10, 3, LBLUE)}{bar(14, 14, 14, 3, LBLUE)}{bar(14, 22, 8, 3, LBLUE)}</>,
  <><rect x="1" y="4" width="32" height="26" fill="#fff" stroke="#aaa" strokeWidth="1.5" /><path d="M6 18L11 9L16 18Z" fill={GREEN} /><path d="M18 9H28L23 18Z" fill="#d9533a" /><path d="M5 24H29" stroke="#666" strokeWidth="1.5" /></>,
  <><rect x="1" y="1" width="30" height="33" fill="#fff" stroke="#bbb" />{bar(1, 1, 30, 5, BLUE)}{bar(5, 10, 5, 5, LBLUE)}{bar(5, 18, 5, 5, TAN)}{bar(5, 26, 5, 5, '#eea9a0')}<path d="M19 18H35L29 25V35H25V25Z" fill="#666" /></>,
  <><rect x="1" y="1" width="30" height="33" fill="#fff" stroke="#bbb" />{bar(1, 1, 30, 4, '#b0b0b0')}<path d="M1 12H31M1 19H31M1 27H31M11 1V34M21 1V34" stroke="#bbb" /></>,
  <><rect x="2" y="1" width="30" height="33" fill="#eee" stroke="#bbb" />{bar(2, 1, 30, 5, BLUE)}<path d="M2 13H32M2 20H32M2 27H32M12 6V34M22 6V34" stroke="#fff" strokeWidth="1.6" />{bar(3, 21, 28, 12, '#b9cfe7')}<path d="M12 21V33M22 21V33M3 27H31" stroke="#fff" /></>,
  <text x="3" y="31" fontSize="40" fontWeight="700" fill={LBLUE} fontFamily="Liberation Sans">R</text>,
  <text x="0" y="27" fontSize="28" fontWeight="700" fill={LBLUE} fontFamily="Roboto">Py</text>,
  <><circle cx="17" cy="17" r="16" fill="#cfcfcf" /><circle cx="17" cy="17" r="12" fill="#1b72c0" /><path d="M8 10L17 6L20 14L10 20ZM18 24L28 18L26 28Z" fill="#3da35d" /></>,
];

function VizGrid() {
  return (
    <div className="pl-[7px] grid grid-cols-[repeat(7,56.2px)] auto-rows-[48px]">
      {VIZ.map((v, i) => (
        <div key={i} className="flex items-center justify-center">
          <div className={i === 26 ? 'w-[44px] h-[44px] border-[4px] border-[#605e5c] flex items-center justify-center' : 'flex'}>
            <svg width={i === 26 ? 30 : 34} height={i === 26 ? 30 : 34} viewBox="0 0 35 35">{v}</svg>
          </div>
        </div>
      ))}
      <div className="flex items-center justify-center gap-[6px]">
        <span className="w-[4px] h-[4px] rounded-full bg-[#333]" />
        <span className="w-[4px] h-[4px] rounded-full bg-[#333]" />
        <span className="w-[4px] h-[4px] rounded-full bg-[#333]" />
      </div>
    </div>
  );
}

const ChevX = () => (
  <div className="flex items-center gap-[17px] mr-[9px]">
    <svg width="22" height="14" viewBox="0 0 22 14"><path d="M1 1L11 13L21 1" fill="none" stroke="#444" strokeWidth="1.3" /></svg>
    <svg width="16" height="15" viewBox="0 0 16 15"><path d="M1 0L15 15M15 0L1 15" stroke="#444" strokeWidth="1.3" /></svg>
  </div>
);

function Chip({ label }: { label: string }) {
  return (
    <div className="h-[45px] mb-[5px] bg-[#edebe9] border-2 border-[#bebbb8] rounded-[3px] flex items-center justify-between pl-[9px] text-[24px] text-[#333] whitespace-nowrap">
      {label}
      <ChevX />
    </div>
  );
}

const Well = ({ className, children }: { className: string; children?: ReactNode }) => (
  <div className={`ml-[8px] w-[431px] bg-white border-2 border-dashed border-[#c8c6c4] rounded-[3px] ${className}`}>{children}</div>
);

const Toggle = () => (
  <div className="flex items-center h-[30px] pl-[9px] text-[#444]">
    <span className="w-[43px]">On</span>
    <div className="relative w-[58px] h-[4px] bg-[#666]">
      <div className="absolute right-0 -top-[11px] w-[26px] h-[26px] rounded-full bg-[#605e5c]" />
    </div>
  </div>
);

function VizPanel() {
  return (
    <div className="w-[456px] shrink-0 h-full bg-[#f3f2f1] border-l-2 border-[#d2d0ce] border-r-2 border-r-[#d2d0ce] relative overflow-hidden text-[23px]">
      <div className="absolute right-0 top-[466px] w-[12px] bottom-[26px] bg-[#c8c6c4] rounded-t-md" />
      <div className="h-[103px] flex items-center justify-between pl-[23px] pr-[20px] text-[31.6px] text-[#333]">
        Visualizations
        <svg width="14" height="24" viewBox="0 0 14 24"><path d="M1 1L12 12L1 23" fill="none" stroke="#444" strokeWidth="1.5" /></svg>
      </div>
      <VizGrid />
      <div className="h-[50px]" />
      <div className="h-[3px] bg-[#e1dfdd] w-[440px]" />
      <div className="h-[72px] relative">
        <svg className="absolute left-[43px] top-[14px]" width="42" height="40" viewBox="0 0 42 40">
          <path d="M1 1H38" stroke="#333" strokeWidth="2" />
          <g fill="none" stroke="#333" strokeWidth="2" strokeDasharray="3 2">
            <rect x="1" y="6" width="38" height="14" />
            <rect x="1" y="25" width="38" height="14" />
          </g>
        </svg>
        <svg className="absolute left-[125px] top-[14px]" width="36" height="42" viewBox="0 0 36 42">
          <rect x="1" y="1" width="28" height="10" rx="2" fill="none" stroke="#333" strokeWidth="2" />
          <path d="M29 6H35V17H18V23" fill="none" stroke="#333" strokeWidth="2" />
          <rect x="13" y="23" width="9" height="18" fill="none" stroke="#333" strokeWidth="2" />
        </svg>
        <svg className="absolute left-[203px] top-[14px]" width="42" height="42" viewBox="0 0 42 42">
          <circle cx="17" cy="17" r="15.5" fill="none" stroke="#333" strokeWidth="2" />
          <path d="M28 28L40 41" stroke="#333" strokeWidth="2" />
          <path d="M3 17L11 12L18 18L29 5M8 30V20M14 32V22M20 32V24M26 27V18" fill="none" stroke="#333" strokeWidth="1.6" />
        </svg>
        <div className="absolute left-[23px] top-[63px] w-[80px] h-[8px] rounded-full bg-[#f2c811]" />
      </div>
      <div className="mt-[13px] h-[30px] leading-[30px] pl-[23px] text-[#444]">Rows</div>
      <Well className="mt-[11px] h-[72px] px-[3px] pt-[6px]"><Chip label="Date" /></Well>
      <div className="mt-[24px] h-[30px] leading-[30px] pl-[23px] text-[#444]">Columns</div>
      <Well className="mt-[12px] h-[54px] flex items-center pl-[19px] text-[24px] text-[#333]">Add data fields here</Well>
      <div className="mt-[24px] h-[30px] leading-[30px] pl-[23px] text-[#444]">Values</div>
      <Well className="mt-[12px] h-[271px] px-[3px] pt-[6px]">
        <Chip label="Earned Daily" />
        <Chip label="Earned Daily % HARDCODED" />
        <Chip label="Earned Daily % by Alexis Olson" />
        <Chip label="Earned Daily % by StelioK" />
        <Chip label="PMB Daily" />
      </Well>
      <div className="mt-[34px] h-[36px] leading-[36px] pl-[27px] text-[33px] font-medium text-[#333]">Drillthrough</div>
      <div className="mt-[31px] h-[30px] leading-[30px] pl-[16px] text-[24px] text-[#444]">Cross-report</div>
      <div className="mt-[18px] pl-[16px]"><Toggle /></div>
      <div className="mt-[29px] h-[30px] leading-[30px] pl-[16px] text-[24px] text-[#444]">Keep all filters</div>
      <div className="mt-[18px] pl-[16px]"><Toggle /></div>
      <Well className="mt-[19px] h-[80px] pl-[15px] pt-[8px] text-[24px] text-[#333]">Add drillthrough fields here</Well>
    </div>
  );
}

function CalcIcon() {
  return (
    <svg width="26" height="24" viewBox="0 0 26 24">
      <rect width="26" height="24" fill="#333" />
      <rect x="2" y="6" width="6" height="16" fill="#aaa" />
      <rect x="10" y="6" width="14" height="16" fill="#fff" />
      <rect x="12" y="2" width="3" height="3" fill="#fff" />
      <text x="13" y="20" fontSize="14" fill="#333" fontFamily="Roboto">Σ</text>
    </svg>
  );
}

function FieldRow({ label, on, kind, caret }: { label: string; on?: boolean; kind?: 'calc' | 'sum' | 'date'; caret?: boolean }) {
  return (
    <div className="h-[48px] flex items-center text-[#333] whitespace-nowrap">
      <div className="w-[64px] flex justify-end pr-[16px]">
        {caret && (
          <svg width="24" height="14" viewBox="0 0 24 14"><path d="M1 1L12 13L23 1" fill="none" stroke="#333" strokeWidth="1.3" /></svg>
        )}
      </div>
      <div className={`w-[24px] h-[24px] rounded-[3px] flex items-center justify-center ${on ? 'bg-[#f2c811]' : 'bg-white border-2 border-[#c8c6c4]'}`}>
        {on && (
          <svg width="14" height="12" viewBox="0 0 14 12"><path d="M1 6L5 11L13 1" fill="none" stroke="#333" strokeWidth="1.6" /></svg>
        )}
      </div>
      <div className="w-[50px] pl-[6px] flex items-center">
        {kind === 'calc' && <CalcIcon />}
        {kind === 'sum' && <span className="text-[27px] leading-[27px] w-[26px] text-center">Σ</span>}
        {kind === 'date' && (
          <svg width="25" height="26" viewBox="0 0 25 26">
            <rect x="1" y="3" width="23" height="22" fill="#fff" stroke="#333" strokeWidth="1.6" />
            <rect x="1" y="3" width="23" height="5" fill="#333" />
            <path d="M6 0V5M19 0V5" stroke="#333" strokeWidth="2" />
            <path d="M5 12H20M5 16H20M5 20H20" stroke="#333" strokeWidth="3" strokeDasharray="3 2" />
          </svg>
        )}
      </div>
      {label}
    </div>
  );
}

function FieldsPanel() {
  return (
    <div className="flex-1 h-full bg-[#f3f2f1] text-[23.5px]">
      <div className="h-[106px] flex items-center justify-between pl-[23px] pr-[24px] text-[31.5px] text-[#333] pb-[5px]">
        Fields
        <svg width="14" height="24" viewBox="0 0 14 24"><path d="M1 1L12 12L1 23" fill="none" stroke="#444" strokeWidth="1.5" /></svg>
      </div>
      <div className="ml-[7px] w-[386px] h-[58px] bg-white border-[3px] border-[#c8c6c4] rounded-[3px] flex items-center pl-[20px] text-[24px] text-[#333]">
        <svg width="32" height="30" viewBox="0 0 32 30">
          <circle cx="20" cy="11" r="10" fill="none" stroke="#333" strokeWidth="1.6" />
          <path d="M13 18L1 29" stroke="#333" strokeWidth="1.8" />
        </svg>
        <span className="ml-[18px] pt-[1px]">Search</span>
      </div>
      <div className="mt-[10px] h-[2px] bg-[#e1dfdd]" />
      <div className="mt-[19px] h-[48px] flex items-center text-[#333] font-medium relative">
        <svg className="ml-[8px]" width="24" height="14" viewBox="0 0 24 14"><path d="M1 13L12 1L23 13" fill="none" stroke="#333" strokeWidth="1.3" /></svg>
        <div className="relative ml-[14px] w-[26px] h-[24px]">
          <svg width="26" height="24" viewBox="0 0 26 24">
            <rect x="1" y="1" width="24" height="22" fill="#fff" stroke="#222" strokeWidth="2" />
            <rect x="1" y="1" width="24" height="6" fill="#222" />
            <path d="M1 12H25M1 18H25M9 7V24M17 7V24" stroke="#222" strokeWidth="2" />
          </svg>
          <div className="absolute left-[14px] top-[14px] w-[24px] h-[24px] rounded-full bg-[#f2c811] flex items-center justify-center">
            <svg width="12" height="10" viewBox="0 0 12 10"><path d="M1 5L4.5 9L11 1" fill="none" stroke="#222" strokeWidth="2" /></svg>
          </div>
        </div>
        <span className="ml-[23px]">Test data</span>
      </div>
      <div className="mt-[14px]">
        <FieldRow label="Act Rem" />
        <FieldRow label="Date" on kind="date" caret />
        <FieldRow label="Earned Daily" on kind="calc" />
        <FieldRow label="Earned Daily % by..." on kind="calc" />
        <FieldRow label="Earned Daily % by..." on kind="calc" />
        <FieldRow label="Earned Daily % H..." on kind="calc" />
        <FieldRow label="Phase" />
        <FieldRow label="PMB Daily" on kind="calc" />
        <FieldRow label="Row" kind="sum" />
        <FieldRow label="TA DFL" />
        <FieldRow label="Type" />
        <FieldRow label="Value" kind="sum" />
      </div>
    </div>
  );
}

function StatusBar() {
  return (
    <div className="h-[43px] bg-[#f3f2f1] border-t-2 border-[#d2d0ce] flex items-center justify-between text-[22px] text-[#555]">
      <div className="pl-[11px] pt-[3px]">PAGE 1 OF 1</div>
      <div className="w-[456px] h-[43px] -mt-[2px] bg-[#797979] text-[#444] flex items-center pl-[11px] pt-[3px] whitespace-nowrap">UPDATE AVAILABLE (CLICK TO DOWNLOAD)</div>
    </div>
  );
}

function Slot({ w, bar, active, children }: { w: string; bar?: boolean; active?: boolean; children: ReactNode }) {
  return (
    <div className={`${w} h-full relative flex items-center justify-center shrink-0 ${active ? 'bg-[#454545]' : ''}`}>
      {children}
      {bar && <div className="absolute left-0 right-0 bottom-0 h-[4px] bg-[#aaa]" />}
    </div>
  );
}

function Taskbar() {
  return (
    <div className="h-[80px] bg-[#1c1c1c] flex items-center text-white shrink-0">
      <div className="w-[97px] flex justify-center">
        <svg width="34" height="34" viewBox="0 0 34 34"><path d="M0 5L15 3V16H0ZM17 2L34 0V16H17ZM0 18H15V31L0 29ZM17 18H34V34L17 32Z" fill="#fff" /></svg>
      </div>
      <div className="w-[688px] h-[78px] mt-[2px] bg-[#484848] border-2 border-[#6d6d6d] flex items-center pl-[22px] text-[29.5px] text-[#d8d8d8]">
        <svg width="34" height="34" viewBox="0 0 34 34">
          <circle cx="21" cy="13" r="11" fill="none" stroke="#ddd" strokeWidth="2" />
          <path d="M13 21L2 33" stroke="#ddd" strokeWidth="2.4" />
        </svg>
        <span className="ml-[22px] pt-[2px]">Type here to search</span>
      </div>
      <div className="flex h-full items-center">
        <Slot w="w-[84px]">
          <svg width="36" height="48" viewBox="0 0 36 48"><rect width="36" height="48" fill="#fff" /><rect x="4" y="5" width="28" height="9" fill="#222" /><path d="M6 20H30M6 28H30M6 36H30" stroke="#222" strokeWidth="4" strokeDasharray="4 5" /></svg>
        </Slot>
        <Slot w="w-[68px]">
          <svg width="42" height="44" viewBox="0 0 42 44"><path d="M10 2L38 8L36 44L2 32Z" fill="#bcd9e2" /><path d="M12 8L34 12L32 38L8 28Z" fill="#4fb0c6" /></svg>
        </Slot>
        <Slot w="w-[91px]">
          <svg width="48" height="44" viewBox="0 0 48 44"><circle cx="26" cy="22" r="22" fill="#d35230" /><path d="M26 0A22 22 0 0 1 48 22H26Z" fill="#ff8f6b" /><rect x="0" y="9" width="26" height="26" fill="#c43e1c" /><text x="7" y="29" fontSize="20" fontWeight="700" fill="#fff" fontFamily="Roboto">P</text></svg>
        </Slot>
        <Slot w="w-[83px]" bar>
          <svg width="48" height="44" viewBox="0 0 48 44"><rect x="8" y="0" width="40" height="44" fill="#2b7cd3" /><rect x="8" y="0" width="40" height="11" fill="#41a5ee" /><rect x="8" y="22" width="40" height="11" fill="#185abd" /><rect x="8" y="33" width="40" height="11" fill="#103f91" /><rect x="0" y="10" width="26" height="26" fill="#185abd" /><text x="5" y="30" fontSize="20" fontWeight="700" fill="#fff" fontFamily="Roboto">W</text></svg>
        </Slot>
        <Slot w="w-[87px]">
          <svg width="48" height="44" viewBox="0 0 48 44"><rect x="8" y="0" width="40" height="44" fill="#21a366" /><rect x="8" y="0" width="40" height="11" fill="#33c481" /><rect x="8" y="22" width="40" height="11" fill="#107c41" /><rect x="8" y="33" width="40" height="11" fill="#185c37" /><rect x="0" y="10" width="26" height="26" fill="#107c41" /><text x="7" y="30" fontSize="20" fontWeight="700" fill="#fff" fontFamily="Roboto">X</text></svg>
        </Slot>
        <Slot w="w-[97px]" active bar>
          <PbiMark size={48} />
        </Slot>
        <div className="w-[8px]" />
        <Slot w="w-[81px]" bar><PbiMark size={48} /></Slot>
        <div className="w-[2px]" />
        <Slot w="w-[86px]">
          <svg width="48" height="48" viewBox="0 0 48 48"><circle cx="24" cy="24" r="24" fill="#dd4b3e" /><path d="M24 24L45 12A24 24 0 0 1 24 48Z" fill="#fbbc05" /><path d="M24 24V48A24 24 0 0 1 3 12Z" fill="#0f9d58" /><circle cx="24" cy="24" r="11" fill="#fff" /><circle cx="24" cy="24" r="8.5" fill="#4285f4" /></svg>
        </Slot>
        <Slot w="w-[64px]">
          <svg width="48" height="48" viewBox="0 0 48 48"><rect width="48" height="48" rx="6" fill="#3a7dbd" /><path d="M36 11H16L12 18V24L32 26V32H12V38H32L38 32V22L18 20V17H36Z" fill="#fff" /></svg>
        </Slot>
        <Slot w="w-[84px]">
          <svg width="46" height="44" viewBox="0 0 46 44"><path d="M10 0H46L36 44H0Z" fill="#3f78d8" /><path d="M13 12L23 22L10 32M22 34H30" fill="none" stroke="#fff" strokeWidth="3" /></svg>
        </Slot>
        <div className="w-[9px]" />
        <Slot w="w-[80px]" bar>
          <svg className="mr-[28px]" width="48" height="48" viewBox="0 0 48 48"><path d="M34 0L48 6V42L34 48L10 28L2 34L0 30L8 24L0 18L2 14L10 20Z" fill="#0e78cf" /><path d="M34 12L18 24L34 36Z" fill="#1c1c1c" /></svg>
          <div className="absolute right-[7px] top-[47px] flex gap-[2px]"><span className="w-[3px] h-[3px] bg-white" /><span className="w-[3px] h-[3px] bg-white" /><span className="w-[3px] h-[3px] bg-white" /><span className="w-[3px] h-[3px] bg-white" /></div>
        </Slot>
        <Slot w="w-[90px]">
          <svg width="32" height="44" viewBox="0 0 32 44"><path d="M2 8H12V2H18V6H30V44H2Z" fill="#c7c7c7" /><path d="M6 12H26M6 18H26M6 24H26M6 30H26" stroke="#555" strokeWidth="2" strokeDasharray="3 2" /><path d="M15 22H18V30H23L16 38L9 30H15Z" fill="#e33" /></svg>
        </Slot>
        <Slot w="w-[60px]">
          <svg width="48" height="48" viewBox="0 0 48 48"><rect width="48" height="48" rx="4" fill="#3d3d3d" /><path d="M12 18L36 10V18L22 24L36 28V36L12 40V32L26 26L12 20Z" fill="#ff9800" /></svg>
        </Slot>
        <Slot w="w-[98px]">
          <svg width="48" height="48" viewBox="0 0 48 48"><path d="M34 0L48 6V42L34 48L10 28L2 34L0 12L10 20Z" fill="#8661c5" /><path d="M34 12L18 24L34 36Z" fill="#1c1c1c" /></svg>
        </Slot>
        <Slot w="w-[58px]">
          <svg width="46" height="48" viewBox="0 0 46 48"><rect x="4" y="0" width="15" height="32" rx="7" fill="#f2c811" /><rect x="4" y="0" width="15" height="11" rx="7" fill="#f0a070" /><path d="M28 2H36V8M2 40V46H10" fill="none" stroke="#2f8f3f" strokeWidth="3" /><path d="M20 24L38 46M38 24L20 46" stroke="#1f6fc0" strokeWidth="4" /></svg>
        </Slot>
        <Slot w="w-[98px]">
          <svg width="46" height="48" viewBox="0 0 46 48"><path d="M14 20A8 8 0 0 1 24 10A10 10 0 0 1 42 18A6 6 0 0 1 40 28H16Z" fill="#71b9de" /><circle cx="10" cy="24" r="8" fill="#c0d040" /><rect x="4" y="26" width="18" height="22" fill="#2b7cd3" /><circle cx="34" cy="38" r="8" fill="none" stroke="#1f4e8c" strokeWidth="4" /></svg>
        </Slot>
        <Slot w="w-[50px]">
          <svg width="44" height="42" viewBox="0 0 44 42"><path d="M0 4H12L16 0H36V8H44V38H0Z" fill="#e8a317" /><rect y="8" width="44" height="34" rx="2" fill="#f7cf5a" /><path d="M12 24H32V40H27V29H17V40H12Z" fill="#2b7cd3" /></svg>
        </Slot>
        <div className="w-[20px]" />
        <Slot w="w-[80px]" bar>
          <svg width="30" height="42" viewBox="0 0 30 42"><path d="M3 0H27V26L17 42L3 36Z" fill="#f4d078" /><path d="M15 0H27V26L15 36Z" fill="#e6b34c" /></svg>
        </Slot>
      </div>
      <div className="ml-auto flex items-center h-full relative">
        <div className="mr-[16px]"><PbiMark size={32} /></div>
        <svg className="mr-[20px]" width="30" height="46" viewBox="0 0 30 46"><path d="M15 0L30 8V28L15 46L0 28V8Z" fill="#fff" /><path d="M15 0V46M0 22H30" stroke="#222" /><circle cx="21" cy="36" r="9" fill="#1b8a3f" /></svg>
        <svg className="mr-[18px]" width="30" height="42" viewBox="0 0 30 42"><circle cx="15" cy="21" r="15" fill="#dd4b3e" /><path d="M15 21L29 14A15 15 0 0 1 15 36Z" fill="#fbbc05" /><path d="M15 21V36A15 15 0 0 1 1 14Z" fill="#0f9d58" /><circle cx="15" cy="21" r="6" fill="#4285f4" stroke="#fff" strokeWidth="2" /></svg>
        <svg className="mr-[19px]" width="30" height="30" viewBox="0 0 30 30"><rect x="10" y="8" width="19" height="18" fill="none" stroke="#fff" strokeWidth="2" /><path d="M5 0V8M1 8H9V14H1ZM5 14V30" fill="none" stroke="#fff" strokeWidth="2" /></svg>
        <svg className="mr-[17px]" width="28" height="32" viewBox="0 0 28 32"><rect x="8" y="3" width="19" height="18" fill="none" stroke="#fff" strokeWidth="2" /><rect x="1" y="1" width="6" height="10" fill="#fff" /><path d="M17 21V30M11 31H23" stroke="#fff" strokeWidth="2" /></svg>
        <svg className="mr-[26px]" width="28" height="28" viewBox="0 0 28 28"><path d="M1 9H7L14 2V26L7 19H1Z" fill="none" stroke="#fff" strokeWidth="1.6" /><path d="M18 9Q21 14 18 19M22 6Q26 14 22 22" fill="none" stroke="#bbb" strokeWidth="1.4" /></svg>
        <div className="w-[46px] text-center text-[23px] text-white mr-[23px]">ENG</div>
        <div className="w-[112px] text-center text-[23.5px] leading-[42px] mr-[39px] whitespace-nowrap">
          <div>3:00 PM</div>
          <div>6/19/2019</div>
        </div>
        <svg className="mr-[48px]" width="32" height="34" viewBox="0 0 32 34"><path d="M0 0H32V24H10L4 30V24H0Z" fill="#fff" /><path d="M5 6H27M5 12H27M5 18H20" stroke="#222" strokeWidth="2" /></svg>
      </div>
    </div>
  );
}

export default function App() {
  return (
    <div className="w-[2880px] h-[1800px] overflow-hidden flex flex-col bg-white font-['Roboto',sans-serif]">
      <TitleBar />
      <Tabs />
      <Ribbon />
      <div className="h-[1391px] flex shrink-0">
        <div className="w-[2023px] shrink-0 flex flex-col">
          <div className="h-[1321px] flex">
            <LeftNav />
            <Canvas />
            <FiltersStrip />
          </div>
          <PageTabs />
        </div>
        <VizPanel />
        <FieldsPanel />
      </div>
      <StatusBar />
      <Taskbar />
    </div>
  );
}
